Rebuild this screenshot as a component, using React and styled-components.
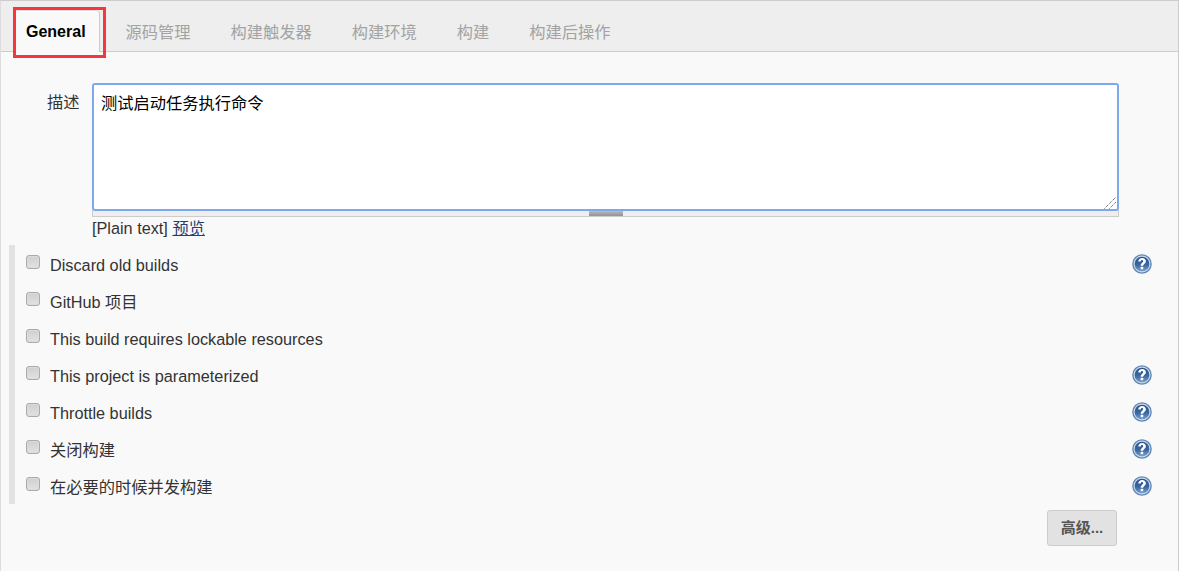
import React from "react";
import styled, { createGlobalStyle } from "styled-components";

const Global = createGlobalStyle`
  html, body { margin: 0; padding: 0; background: #fff; }
  body { font-family: "Liberation Sans", "Noto Sans CJK SC", sans-serif; font-size: 16.25px; color: #333; }
`;
const Page = styled.div`
  position: relative;
  box-sizing: border-box;
  width: 1179px;
  height: 571px;
  background: #f9f9f9;
  border-top: 1px solid #ccc;
  border-right: 1px solid #ccc;
  border-left: 1px solid #ddd;
`;
const TabBar = styled.div`
  box-sizing: border-box;
  height: 51px;
  background: #eee;
  border-bottom: 1px solid #ccc;
  display: flex;
  align-items: flex-end;
  padding-left: 14px;
`;
const Tab = styled.div`
  box-sizing: border-box;
  height: ${p => (p.$active ? "42px" : "41px")};
  margin-bottom: ${p => (p.$active ? "-1px" : "0")};
  padding: ${p => (p.$active ? "11px 13px 0 10px" : "11px 11px 0")};
  margin-right: ${p => p.$gap}px;
  line-height: 20px;
  white-space: nowrap;
  font-size: ${p => (p.$active ? "16px" : "16.25px")};
  font-weight: ${p => (p.$active ? 700 : 400)};
  color: ${p => (p.$active ? "#000" : "#a3a3a3")};
  background: ${p => (p.$active ? "#f9f9f9" : "transparent")};
  border: ${p => (p.$active ? "1px solid #ccc" : "1px solid transparent")};
  border-bottom: none;
  border-radius: 4px 4px 0 0;
  ${p => p.$active && "border-left-color: #eee; border-top-color: #ddd;"}
`;
const RedBox = styled.div`
  position: absolute;
  left: 12px;
  top: 6px;
  width: 93px;
  height: 51px;
  box-sizing: border-box;
  border: 3px solid #f5363c;
`;
const Form = styled.div`
  padding-top: 31px;
`;
const DescRow = styled.div`
  display: flex;
  padding-left: 46px;
`;
const DescLabel = styled.div`
  width: 45px;
  padding-top: 9px;
  line-height: 20px;
`;
const DescField = styled.div`
  width: 1027px;
`;
const TextBox = styled.div`
  position: relative;
  box-sizing: border-box;
  height: 128px;
  background: #fff;
  border: 2px solid #7ea8ee;
  border-radius: 3px;
  padding: 8px 7px;
  line-height: 20px;
  color: #000;
`;
const Grip = styled.svg`
  position: absolute;
  right: 0;
  bottom: 0;
`;
const Handle = styled.div`
  box-sizing: border-box;
  height: 7px;
  background: #eee;
  border: 1px solid #ccc;
  border-top: none;
  display: flex;
  justify-content: center;
  margin-top: -1px;
`;
const HandleBar = styled.div`
  width: 34px;
  height: 6px;
  background: linear-gradient(#999 0 1px, #bbb 1px 2px, #aaa 2px 4px, #999 4px);
`;
const Note = styled.div`
  line-height: 22px;
`;
const PreviewLink = styled.a`
  color: #1f3f73;
  text-decoration: underline;
`;
const Options = styled.div`
  margin: 6px 0 0 8px;
  width: 1137px;
  border-left: 6px solid #e2e2e2;
`;
const Row = styled.div`
  display: flex;
  align-items: center;
  height: 37px;
  padding-left: 11px;
`;
const Check = styled.span`
  box-sizing: border-box;
  width: 14px;
  height: 14px;
  margin-top: -3px;
  border: 1px solid #aaa;
  border-radius: 3px;
  background: linear-gradient(#cfcfcf, #e2e2e2);
  box-shadow: inset 0 0 0 1px #dcdcdc;
`;
const OptLabel = styled.span`
  margin-left: 10px;
  flex: 1;
  line-height: 20px;
  height: 20px;
  margin-top: 2px;
`;
const HelpSvg = styled.svg`
  display: block;
  margin-top: 1px;
`;
const Footer = styled.div`
  display: flex;
  justify-content: flex-end;
  width: 1116px;
  margin-top: 6px;
`;
const Advanced = styled.button`
  box-sizing: border-box;
  width: 70px;
  height: 36px;
  background: #e2e2e2;
  border: 1px solid #ccc;
  border-radius: 3px;
  color: #555;
  font: 700 15px "Liberation Sans", "Noto Sans CJK SC", sans-serif;
  padding: 0 0 4px;
`;

const Help = () => (
  <HelpSvg width="20" height="20" viewBox="0 0 20 20">
    <defs>
      <linearGradient id="hg" x1="0" y1="0" x2="0" y2="1">
        <stop offset="0%" stopColor="#274f8c" />
        <stop offset="55%" stopColor="#3a679f" />
        <stop offset="100%" stopColor="#7fa3cc" />
      </linearGradient>
    </defs>
    <circle cx="10" cy="10" r="9.8" fill="#5f86b6" />
    <circle cx="10" cy="10" r="7.9" fill="url(#hg)" stroke="#c9d8ea" strokeWidth="1.1" />
    <path d="M6.2 7.6C6.4 5.2 8 4 10.1 4c2.2 0 3.8 1.3 3.8 3.2 0 2.6-2.7 2.6-2.7 4.6H8.7c0-3 2.5-3.1 2.5-4.5 0-.7-.5-1.2-1.2-1.2-.8 0-1.2.6-1.3 1.5z" fill="#fff" />
    <rect x="8.7" y="12.8" width="2.5" height="2.5" rx=".5" fill="#fff" />
  </HelpSvg>
);

const tabs = [
  ["General", 14, true],
  ["源码管理", 16],
  ["构建触发器", 16],
  ["构建环境", 16],
  ["构建", 16],
  ["构建后操作", 0],
];
const rows = [
  ["Discard old builds", true],
  ["GitHub 项目", false],
  ["This build requires lockable resources", false],
  ["This project is parameterized", true],
  ["Throttle builds", true],
  ["关闭构建", true],
  ["在必要的时候并发构建", true],
];

export default function App() {
  return (
    <Page>
      <Global />
      <TabBar>
        {tabs.map(([t, g, a]) => (
          <Tab key={t} $active={a} $gap={g}>{t}</Tab>
        ))}
      </TabBar>
      <RedBox />
      <Form>
        <DescRow>
          <DescLabel>描述</DescLabel>
          <DescField>
            <TextBox>
              测试启动任务执行命令
              <Grip width="14" height="14" viewBox="0 0 14 14">
                <path d="M1.5 13.5 13 2M6.5 13.5 13 7" stroke="#444" strokeWidth="1" strokeDasharray="1 1" fill="none" />
              </Grip>
            </TextBox>
            <Handle><HandleBar /></Handle>
            <Note>[Plain text] <PreviewLink href="#">预览</PreviewLink></Note>
          </DescField>
        </DescRow>
        <Options>
          {rows.map(([t, h]) => (
            <Row key={t}>
              <Check />
              <OptLabel>{t}</OptLabel>
              {h && <Help />}
            </Row>
          ))}
        </Options>
        <Footer><Advanced>高级...</Advanced></Footer>
      </Form>
    </Page>
  );
}
